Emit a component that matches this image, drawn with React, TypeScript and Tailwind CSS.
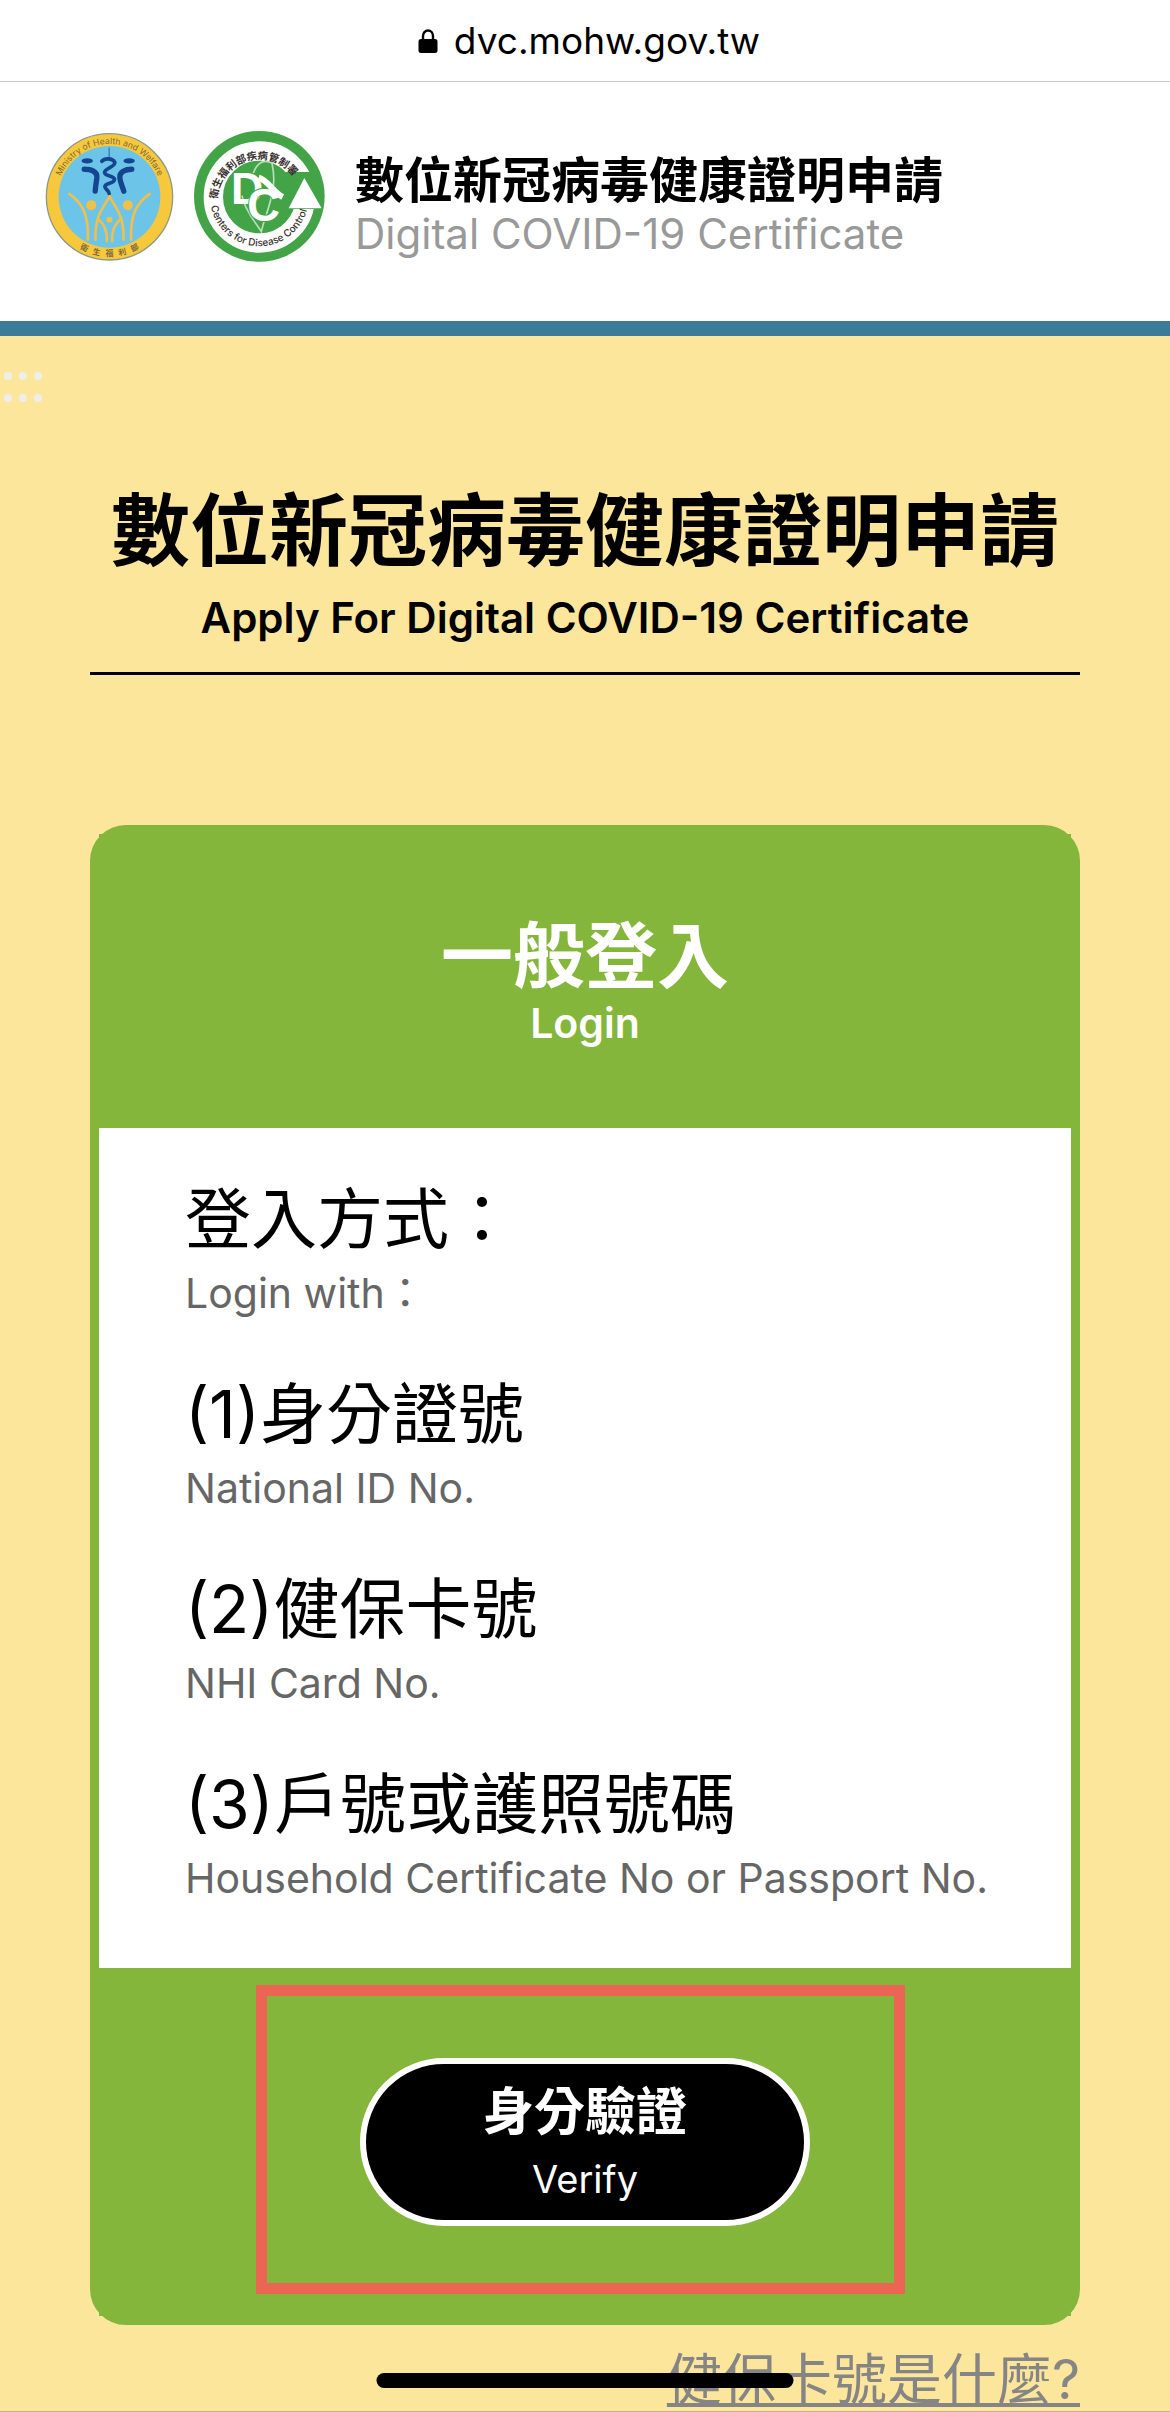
import React from "react";

const LOGIN_METHODS = [
  { zh: "登入方式：", en: "Login with：" },
  { zh: "(1)身分證號", en: "National ID No." },
  { zh: "(2)健保卡號", en: "NHI Card No." },
  { zh: "(3)戶號或護照號碼", en: "Household Certificate No or Passport No." },
];

const LockIcon = () => (
  <svg className="w-5 h-6" viewBox="0 0 20 24" aria-hidden="true">
    <path d="M5 11V7a5 5.500 0 0 1 10 0V11" fill="none" stroke="#000" strokeWidth="2.400" />
    <rect x="0.500" y="10" width="19" height="14" rx="2.500" fill="#000" />
  </svg>
);

// Ministry of Health and Welfare emblem
const MinistryLogo = () => (
  <svg className="w-[129px] h-[129px]" viewBox="45 70 388 388" role="img" aria-label="衛生福利部">
    <defs>
      <path id="mohw-top" d="M80 265a159 159 0 0 1 318 0" />
      <path id="mohw-bottom" d="M60 265a179 179 0 0 0 358 0" />
    </defs>
    <circle cx="239" cy="265" r="190" fill="#f8c83c" stroke="#8b9a86" strokeWidth="4" />
    <circle cx="239" cy="265" r="153" fill="#6cc5e8" />
    <g fill="#7d6a3c" fontFamily="Inter, 'Noto Sans CJK TC', sans-serif">
      <text fontSize="26" textAnchor="middle">
        <textPath href="#mohw-top" startOffset="50%">Ministry of Health and Welfare</textPath>
      </text>
      <text fontSize="24" fontWeight="700" textAnchor="middle" xmlSpace="preserve">
        <textPath href="#mohw-bottom" startOffset="50%">衛 &#160; 生 &#160; 福 &#160; 利 &#160; 部</textPath>
      </text>
    </g>
    <g fill="none" stroke="#16458f" strokeLinecap="round">
      <path d="M238 118V152" strokeWidth="4" stroke="#3b79b4" />
      <path
        d="M216 158C224 148 248 148 255 161C258 175 224 178 224 192C226 205 254 200 254 213C253 226 226 222 225 234C226 243 238 246 238 256"
        strokeWidth="11"
      />
      <path d="M163 182C184 182 203 188 201 208C199 222 197 232 196 248" strokeWidth="16" />
      <path d="M306 182C287 182 268 190 270 208C272 224 278 234 282 248" strokeWidth="16" />
    </g>
    <ellipse cx="172" cy="157" rx="17" ry="8" fill="#16458f" />
    <ellipse cx="298" cy="157" rx="17" ry="8" fill="#16458f" />
    <g fill="none" stroke="#f1bf4b" strokeWidth="8" strokeLinecap="round">
      <path d="M118 256C158 284 177 320 174 394" />
      <path d="M360 256C320 284 301 320 304 394" />
      <path d="M239 264C222 296 194 320 197 394" />
      <path d="M239 264C256 296 284 320 281 394" />
      <path d="M207 334C226 350 233 370 231 398" />
      <path d="M271 334C252 350 245 370 247 398" />
    </g>
    <g fill="#f1bf4b">
      <circle cx="184" cy="290" r="15" />
      <circle cx="294" cy="290" r="15" />
      <circle cx="239" cy="334" r="9" />
    </g>
  </svg>
);

// Centers for Disease Control emblem
const CdcLogo = () => (
  <svg className="w-[131px] h-[131px]" viewBox="490 64 393 393" role="img" aria-label="衛生福利部疾病管制署">
    <defs>
      <path id="cdc-top" d="M560 275a126 126 0 1 1 252 0" />
      <path id="cdc-bottom" d="M538 262a148 148 0 0 0 296 0" />
    </defs>
    <circle cx="686" cy="260" r="196" fill="#43a347" />
    <circle cx="686" cy="262" r="138" fill="none" stroke="#fff" strokeWidth="58" />
    <path d="M762 187H860V298H762Z" fill="#43a347" />
    <path d="M762 186H836L815 158H762Z" fill="#fff" />
    <path d="M821 205L873 296H774Z" fill="#fff" />
    <path
      d="M668 190C680 158 700 148 724 160C730 190 732 230 722 262C714 300 700 330 692 366C676 340 640 300 634 258"
      fill="none"
      stroke="#b9dfba"
      strokeWidth="5"
    />
    <g fill="#3a3230" fontFamily="Inter, 'Noto Sans CJK TC', sans-serif">
      <text fontSize="31" fontWeight="700">
        <textPath href="#cdc-top" startOffset="6">衛生福利部疾病管制署</textPath>
      </text>
      <text fontSize="30" fontWeight="500">
        <textPath href="#cdc-bottom" startOffset="28">Centers for Disease Control</textPath>
      </text>
    </g>
    <g fill="#fff" fontFamily="'Liberation Sans', sans-serif" fontWeight="700">
      <text x="601" y="284" fontSize="134">D</text>
      <text x="650" y="334" fontSize="136" stroke="#43a347" strokeWidth="6" paintOrder="stroke">C</text>
    </g>
    <path d="M684 204C712 212 726 246 756 262" fill="none" stroke="#fff" strokeWidth="18" />
  </svg>
);

const AccessDots = () => (
  <svg className="w-12 h-8" viewBox="0 0 48 32" fill="#eeeeee" aria-hidden="true">
    {[8, 23, 38].map((x) => (
      <g key={x}>
        <circle cx={x} cy="5" r="4" />
        <circle cx={x} cy="27" r="4" />
      </g>
    ))}
  </svg>
);

export default function App() {
  return (
    <div className="relative flex flex-col min-h-screen bg-[#fbe69c] border-b border-[#c4b57c] text-black font-[Inter,'Noto_Sans_CJK_TC',sans-serif]">
      <div className="flex items-center justify-center gap-4 h-[82px] pl-2 bg-white border-b border-[#c8c8c8]">
        <LockIcon />
        <span className="text-[37px] leading-[80px]">dvc.mohw.gov.tw</span>
      </div>

      <header className="flex items-start h-[254px] pt-[49px] pl-[45px] bg-white border-b-[15px] border-[#3c7a99]">
        <div className="flex items-center gap-5 mr-[30px]">
          <MinistryLogo />
          <CdcLogo />
        </div>
        <div className="pt-[22px]">
          <p className="text-[49px] leading-[56px] font-bold">數位新冠病毒健康證明申請</p>
          <p className="text-[42px] leading-[50px] text-[#999999]">Digital COVID-19 Certificate</p>
        </div>
      </header>

      <main className="flex flex-col grow">
        <a href="#content" aria-label="主要內容區" className="block w-12 mt-[35px]">
          <AccessDots />
        </a>

        <div id="content" className="mx-[90px] mt-[77px]">
          <div className="pb-4 border-b-[3px] border-black text-center">
            <h1 className="pt-[2px] text-[79px] leading-[98px] font-bold whitespace-nowrap">數位新冠病毒健康證明申請</h1>
            <p className="text-[42px] leading-[76px] font-semibold">Apply For Digital COVID-19 Certificate</p>
          </div>

          <section className="mt-[150px] border-[9px] border-[#84b63b] bg-[#84b63b] rounded-[36px]">
            <div className="pt-[78px] pb-[82px] bg-[#84b63b] text-center text-white">
              <h2 className="text-[72px] leading-[88px] font-bold">一般登入</h2>
              <p className="text-[41px] leading-[46px] font-semibold">Login</p>
            </div>

            <ul className="flex flex-col gap-[47px] pt-[46px] pb-[61px] px-[86px] bg-white">
              {LOGIN_METHODS.map((method) => (
                <li key={method.zh}>
                  <p className="text-[66px] leading-[90px]">{method.zh}</p>
                  <p className="text-[41px] leading-[58px] text-[#666666] whitespace-nowrap">{method.en}</p>
                </li>
              ))}
            </ul>

            <div className="relative flex justify-center py-[90px] bg-[#84b63b]">
              <button
                type="button"
                className="w-[450px] pt-[13px] pb-[9px] border-[6px] border-white rounded-full bg-black text-white text-center">
                <span className="block text-[51px] leading-[70px] font-bold">身分驗證</span>
                <span className="block text-[38px] leading-[64px]">Verify</span>
              </button>
              <div className="absolute top-[17px] bottom-[22px] left-[157px] right-[166px] border-[11px] border-[#ec6453] pointer-events-none" />
            </div>
          </section>

          <div className="mt-[22px] text-right">
            <a
              href="#nhi-card"
              className="block text-[55px] leading-[64px] text-[#858585] underline decoration-4 underline-offset-4">
              健保卡號是什麼?
            </a>
          </div>
        </div>
      </main>

      {/* home indicator */}
      <div className="absolute bottom-[23px] left-1/2 w-[417px] h-[15px] -translate-x-1/2 rounded-full bg-black" />
    </div>
  );
}
